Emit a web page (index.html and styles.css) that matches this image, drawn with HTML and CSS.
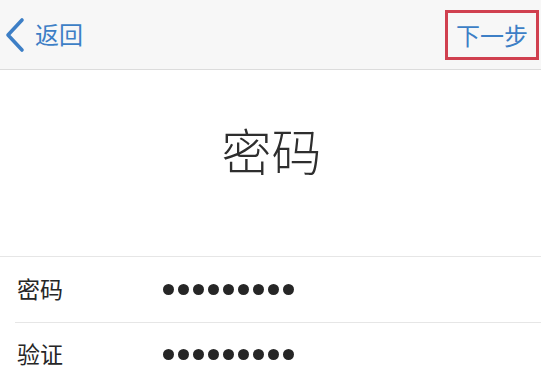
FILE: index.html
```html
<!DOCTYPE html>
<html lang="zh">
<head>
<meta charset="utf-8">
<link rel="stylesheet" href="styles.css">
</head>
<body>
<div class="nav">
  <div class="back">
    <svg class="chev" width="20" height="36" viewBox="0 0 20 36"><path d="M17 3 L3 18 L17 33" fill="none" stroke="#3d7fc6" stroke-width="3.6" stroke-linecap="round" stroke-linejoin="round"/></svg>
    <span class="back-text">返回</span>
  </div>
  <div class="next">下一步</div>
</div>
<div class="title-area">
  <div class="title">密码</div>
</div>
<div class="list">
  <div class="row">
    <div class="label">密码</div>
    <div class="dots"><i></i><i></i><i></i><i></i><i></i><i></i><i></i><i></i><i></i></div>
  </div>
  <div class="row row-2">
    <div class="label">验证</div>
    <div class="dots"><i></i><i></i><i></i><i></i><i></i><i></i><i></i><i></i><i></i></div>
  </div>
</div>
</body>
</html>
```
FILE: styles.css
```css
html, body {
  margin: 0;
  padding: 0;
  background: #ffffff;
  font-family: "Noto Sans CJK SC", "Noto Sans", sans-serif;
  width: 541px;
  height: 385px;
  overflow: hidden;
}
.nav {
  height: 69px;
  background: #f7f7f7;
  border-bottom: 1px solid #dcdcdc;
  display: flex;
  align-items: center;
  justify-content: space-between;
  padding: 0 2px 0 5px;
  box-sizing: content-box;
}
.back {
  display: flex;
  align-items: center;
  gap: 10px;
  color: #3d7fc6;
}
.chev {
  display: block;
}
.back-text {
  font-size: 24px;
  line-height: 1;
  margin-top: -1px;
}
.next {
  width: 88px;
  height: 44px;
  border: 3px solid #d0404f;
  color: #3d7fc6;
  font-size: 24px;
  line-height: 44px;
  text-align: center;
  box-sizing: content-box;
  margin-top: 1px;
}
.title-area {
  height: 186px;
  display: flex;
  justify-content: center;
}
.title {
  margin-top: 54px;
  font-size: 50px;
  line-height: 50px;
  font-weight: 300;
  color: #2e2e2e;
  padding-left: 2px;
}
.list {
  border-top: 1px solid #e6e6e6;
}
.row {
  height: 65px;
  display: flex;
  align-items: center;
  padding-left: 2px;
  margin-left: 15px;
}
.row-2 {
  border-top: 1px solid #e6e6e6;
  height: 63px;
}
.label {
  width: 146px;
  font-size: 23px;
  line-height: 1;
  color: #262626;
  margin-top: -3px;
}
.dots {
  display: flex;
  gap: 4px;
}
.dots i {
  display: block;
  width: 11px;
  height: 11px;
  border-radius: 50%;
  background: #262626;
}
```
